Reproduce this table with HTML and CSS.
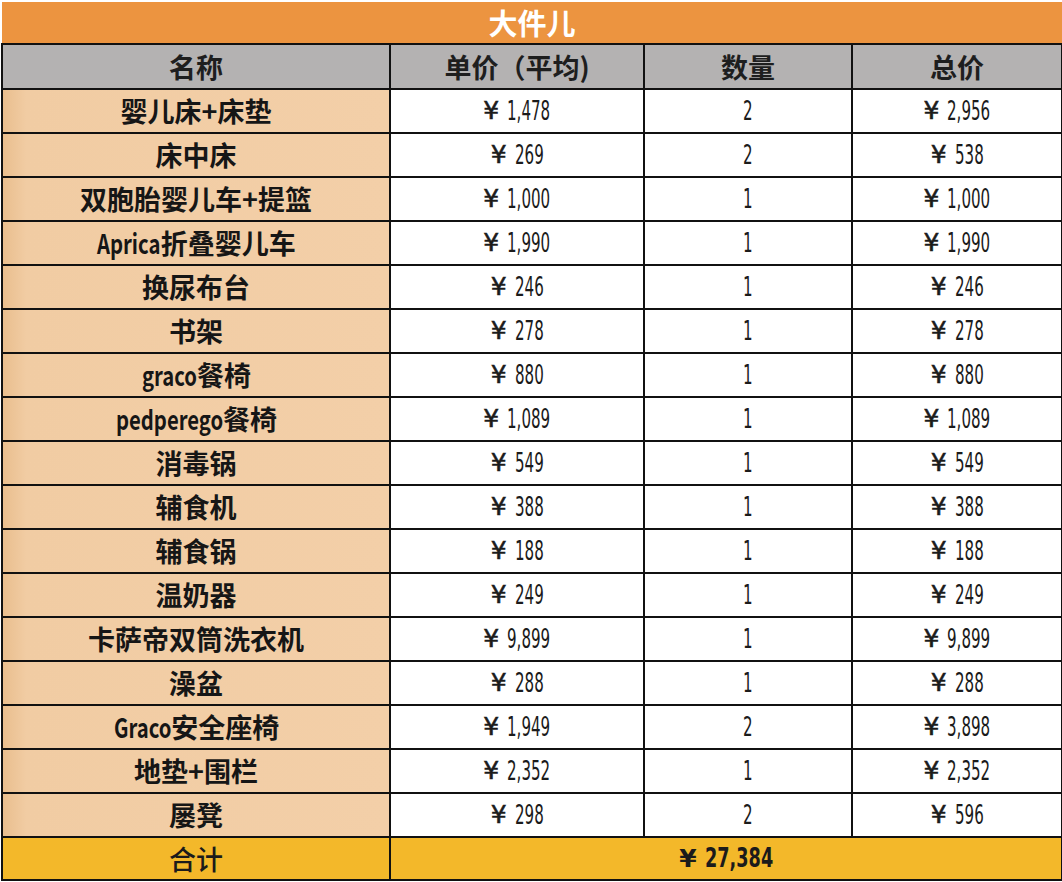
FILE: index.html
```html
<!DOCTYPE html>
<html lang="zh">
<head>
<meta charset="utf-8">
<title>大件儿</title>
<link rel="stylesheet" href="styles.css">
</head>
<body>
<table class="sheet">
  <colgroup>
    <col class="c-name"><col class="c-price"><col class="c-qty"><col class="c-total">
  </colgroup>
  <thead>
    <tr class="title-row"><th colspan="4">大件儿</th></tr>
    <tr class="head-row"><th>名称</th><th>单价（平均)</th><th>数量</th><th>总价</th></tr>
  </thead>
  <tbody>
    <tr><td class="name">婴儿床+床垫</td><td><span class="y">¥</span><span class="n">1,478</span></td><td><span class="n">2</span></td><td><span class="y">¥</span><span class="n">2,956</span></td></tr>
    <tr><td class="name">床中床</td><td><span class="y">¥</span><span class="n">269</span></td><td><span class="n">2</span></td><td><span class="y">¥</span><span class="n">538</span></td></tr>
    <tr><td class="name">双胞胎婴儿车+提篮</td><td><span class="y">¥</span><span class="n">1,000</span></td><td><span class="n">1</span></td><td><span class="y">¥</span><span class="n">1,000</span></td></tr>
    <tr><td class="name"><span class="lat">Aprica</span>折叠婴儿车</td><td><span class="y">¥</span><span class="n">1,990</span></td><td><span class="n">1</span></td><td><span class="y">¥</span><span class="n">1,990</span></td></tr>
    <tr><td class="name">换尿布台</td><td><span class="y">¥</span><span class="n">246</span></td><td><span class="n">1</span></td><td><span class="y">¥</span><span class="n">246</span></td></tr>
    <tr><td class="name">书架</td><td><span class="y">¥</span><span class="n">278</span></td><td><span class="n">1</span></td><td><span class="y">¥</span><span class="n">278</span></td></tr>
    <tr><td class="name"><span class="lat">graco</span>餐椅</td><td><span class="y">¥</span><span class="n">880</span></td><td><span class="n">1</span></td><td><span class="y">¥</span><span class="n">880</span></td></tr>
    <tr><td class="name"><span class="lat">pedperego</span>餐椅</td><td><span class="y">¥</span><span class="n">1,089</span></td><td><span class="n">1</span></td><td><span class="y">¥</span><span class="n">1,089</span></td></tr>
    <tr><td class="name">消毒锅</td><td><span class="y">¥</span><span class="n">549</span></td><td><span class="n">1</span></td><td><span class="y">¥</span><span class="n">549</span></td></tr>
    <tr><td class="name">辅食机</td><td><span class="y">¥</span><span class="n">388</span></td><td><span class="n">1</span></td><td><span class="y">¥</span><span class="n">388</span></td></tr>
    <tr><td class="name">辅食锅</td><td><span class="y">¥</span><span class="n">188</span></td><td><span class="n">1</span></td><td><span class="y">¥</span><span class="n">188</span></td></tr>
    <tr><td class="name">温奶器</td><td><span class="y">¥</span><span class="n">249</span></td><td><span class="n">1</span></td><td><span class="y">¥</span><span class="n">249</span></td></tr>
    <tr><td class="name">卡萨帝双筒洗衣机</td><td><span class="y">¥</span><span class="n">9,899</span></td><td><span class="n">1</span></td><td><span class="y">¥</span><span class="n">9,899</span></td></tr>
    <tr><td class="name">澡盆</td><td><span class="y">¥</span><span class="n">288</span></td><td><span class="n">1</span></td><td><span class="y">¥</span><span class="n">288</span></td></tr>
    <tr><td class="name"><span class="lat">Graco</span>安全座椅</td><td><span class="y">¥</span><span class="n">1,949</span></td><td><span class="n">2</span></td><td><span class="y">¥</span><span class="n">3,898</span></td></tr>
    <tr><td class="name">地垫+围栏</td><td><span class="y">¥</span><span class="n">2,352</span></td><td><span class="n">1</span></td><td><span class="y">¥</span><span class="n">2,352</span></td></tr>
    <tr><td class="name">屡凳</td><td><span class="y">¥</span><span class="n">298</span></td><td><span class="n">2</span></td><td><span class="y">¥</span><span class="n">596</span></td></tr>
  </tbody>
  <tfoot>
    <tr class="total-row"><td class="total-label">合计</td><td colspan="3"><span class="y yb">¥</span><span class="n nb">27,384</span></td></tr>
  </tfoot>
</table>
<script src="script.js"></script>
</body>
</html>
```
FILE: styles.css
```css
html, body {
  margin: 0;
  padding: 0;
  background: #ffffff;
}
body {
  padding: 2px 1px 0 1px;
  font-family: "Noto Sans CJK SC", "Noto Sans", sans-serif;
  color: #1b1b1b;
}
.sheet {
  border-collapse: collapse;
  width: 1060px;
  table-layout: fixed;
}
.c-name { width: 388px; }
.c-price { width: 254px; }
.c-qty { width: 208px; }
.c-total { width: 210px; }

.sheet th, .sheet td {
  border: 2px solid #111111;
  text-align: center;
  padding: 0;
  height: 42px;
  line-height: 42px;
  white-space: nowrap;
  overflow: hidden;
}
.title-row th {
  background: #ec9440;
  color: #ffffff;
  font-size: 29px;
  font-weight: 700;
  border-top: none;
  border-left: none;
  border-right: none;
  height: 41px;
  line-height: 41px;
}
.head-row th {
  background: #b4b2b2;
  font-size: 27px;
  font-weight: 700;
  color: #1e1e1e;
  height: 43px;
  line-height: 43px;
}
td.name {
  background: linear-gradient(90deg, #e9be8e 0%, #f1cca3 6%, #f3cfa8 100%);
  font-size: 27px;
  font-weight: 700;
  color: #161616;
}
.lat {
  display: inline-block;
  transform: scaleX(0.75);
  transform-origin: left center;
  vertical-align: top;
  margin-left: 1px;
}
.y {
  display: inline-block;
  font-family: "DejaVu Sans", sans-serif;
  font-size: 25px;
  font-weight: 400;
  -webkit-text-stroke: 0.6px #1b1b1b;
  margin-right: 8px;
  vertical-align: top;
}
.n {
  display: inline-block;
  font-family: "DejaVu Sans", sans-serif;
  font-size: 26px;
  font-weight: 400;
  transform: scaleX(0.58);
  transform-origin: left center;
  vertical-align: top;
}
.total-row td {
  background: #f3b82a;
  height: 41px;
  line-height: 41px;
}
.total-label {
  font-size: 27px;
  font-weight: 500;
}
.yb {
  font-weight: 700;
  -webkit-text-stroke: 0;
}
.nb {
  font-weight: 700;
  transform: scaleX(0.68);
}
```
FILE: script.js
```js
document.querySelectorAll('.n, .lat').forEach(function (el) {
  var m = new DOMMatrixReadOnly(getComputedStyle(el).transform);
  var w = el.offsetWidth;
  el.style.marginRight = (-(1 - m.a) * w) + 'px';
});
```
